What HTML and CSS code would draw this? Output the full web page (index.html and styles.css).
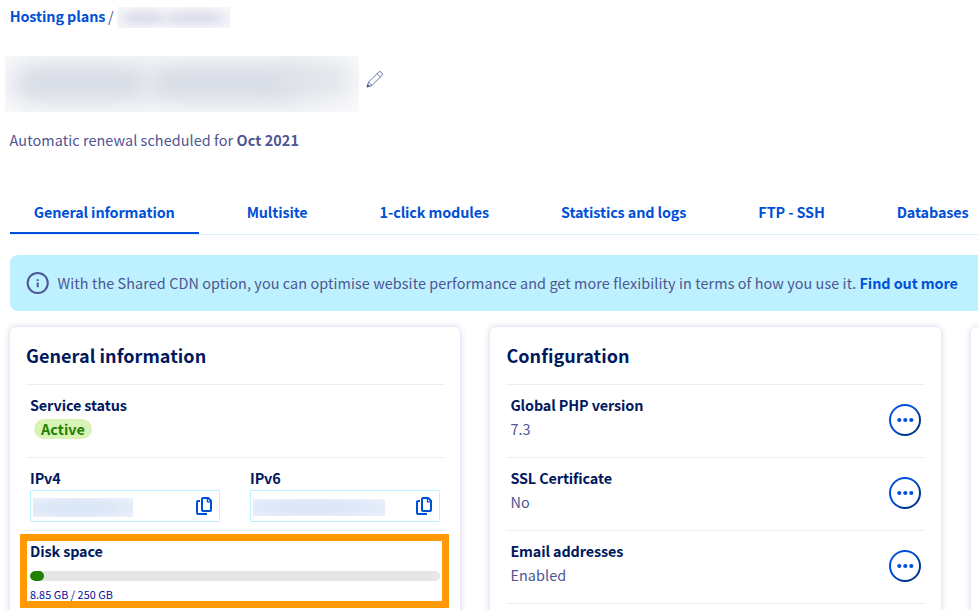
FILE: index.html
```html
<!DOCTYPE html>
<html lang="en">
<head>
<meta charset="utf-8">
<title>Hosting plans</title>
<link rel="stylesheet" href="styles.css">
</head>
<body>
<svg class="defs" width="0" height="0" aria-hidden="true">
  <defs>
    <linearGradient id="ring" x1="0" y1="0" x2="1" y2="1">
      <stop offset="0.4" stop-color="#0050d7"/>
      <stop offset="0.75" stop-color="#00368f"/>
    </linearGradient>
    <symbol id="dots" viewBox="0 0 32 32">
      <circle cx="16" cy="16" r="15" fill="none" stroke="url(#ring)" stroke-width="2"/>
      <g fill="#0050d7"><circle cx="10.3" cy="16" r="2.1"/><circle cx="16.3" cy="16" r="2.1"/><circle cx="22.3" cy="16" r="2.1"/></g>
    </symbol>
    <symbol id="copy" viewBox="0 0 16 18">
      <g fill="none" stroke="#0050d7" stroke-width="2" stroke-linejoin="round">
        <path d="M7 1h5.2L15 3.8V13a1 1 0 0 1-1 1H7a1 1 0 0 1-1-1V2a1 1 0 0 1 1-1z"/>
        <path d="M4 4H2a1 1 0 0 0-1 1v11a1 1 0 0 0 1 1h9"/>
        <path d="M11.4 1v3.8H15" stroke-width="1.2"/>
      </g>
    </symbol>
  </defs>
</svg>
<nav class="breadcrumb"><a class="link">Hosting plans</a><span class="slash">/</span><span class="mask mask-crumb"><i></i><i></i></span></nav>
<header class="title">
  <span class="mask mask-title"><i></i><i></i><i></i></span>
  <svg class="pencil" width="18" height="18" viewBox="0 0 18 18" fill="none" stroke="#4d5592" stroke-width=".8">
    <path d="M1 17l1.6-5L12.5 2.1a1.8 1.8 0 0 1 2.5 0l.9.9a1.8 1.8 0 0 1 0 2.5L6 15.4z"/>
    <path d="M2.6 12L6 15.4M11 3.6L14.4 7"/>
    <path d="M1 17l.8-2.6 1.8 1.8z" fill="#4d5592"/>
  </svg>
</header>
<p class="renewal"><span>Automatic renewal scheduled for</span> <b>Oct 2021</b></p>
<nav class="tabs">
  <a class="tab active">General information</a>
  <a class="tab">Multisite</a>
  <a class="tab">1-click modules</a>
  <a class="tab">Statistics and logs</a>
  <a class="tab">FTP - SSH</a>
  <a class="tab">Databases</a>
</nav>
<div class="banner">
  <svg width="24" height="24" viewBox="0 0 24 24"><circle cx="11.7" cy="12" r="10.1" fill="none" stroke="#4d5592" stroke-width="2"/><path d="M11.7 11.5v4.7M11.7 8.2v1.9" stroke="#4d5592" stroke-width="2"/></svg>
  <span class="banner-text">With the Shared CDN option, you can optimise website performance and get more flexibility in terms of how you use it.</span>
  <a class="link">Find out more</a>
</div>
<main class="cards">
  <section class="card">
    <h2>General information</h2>
    <div class="row">
      <div class="label">Service status</div>
      <span class="badge">Active</span>
    </div>
    <div class="row ips">
      <div class="ip"><div class="label">IPv4</div><div class="field"><span class="mask mask-v4"></span><svg width="16" height="18"><use href="#copy"/></svg></div></div>
      <div class="ip"><div class="label">IPv6</div><div class="field"><span class="mask mask-v6"></span><svg width="16" height="18"><use href="#copy"/></svg></div></div>
    </div>
    <div class="row disk">
      <div class="label">Disk space</div>
      <div class="bar"><div class="fill"></div></div>
      <div class="usage">8.85 GB / 250 GB</div>
      <div class="highlight"></div>
    </div>
  </section>
  <section class="card">
    <h2>Configuration</h2>
    <div class="row split"><div><div class="label">Global PHP version</div><div class="value">7.3</div></div><svg width="32" height="32"><use href="#dots"/></svg></div>
    <div class="row split"><div><div class="label">SSL Certificate</div><div class="value">No</div></div><svg width="32" height="32"><use href="#dots"/></svg></div>
    <div class="row split"><div><div class="label">Email addresses</div><div class="value">Enabled</div></div><svg width="32" height="32"><use href="#dots"/></svg></div>
    <div class="row last"></div>
  </section>
  <section class="card"></section>
</main>
</body>
</html>
```

FILE: styles.css
```css
* { box-sizing: border-box; }
body {
  margin: 0;
  height: 610px;
  overflow: hidden;
  background: #fff;
  color: #4d5592;
  font: 14.4px/24px "Noto Sans CJK SC", "Noto Sans", sans-serif;
  letter-spacing: .085px;
  white-space: nowrap;
}
.defs { position: absolute; }
svg { display: block; flex: none; }
.link { color: #0050d7; font-weight: 700; letter-spacing: -.09px; }
.breadcrumb { display: flex; height: 34px; padding: 4px 0 0 9.7px; }
.slash { margin: 0 3px 0 2.6px; }
.mask { position: relative; display: block; overflow: hidden; flex: none; }
.mask i { position: absolute; border-radius: 50%; }
.mask-crumb { width: 113px; height: 21px; margin-top: 3px; background: #f6f6fa; }
.mask-crumb i { background: #d9d9ea; filter: blur(5px); top: 5px; height: 12px; left: 3px; width: 46px; }
.mask-crumb i + i { left: 46px; width: 64px; }
.title { display: flex; margin: 22px 0 0 5px; height: 56px; }
.mask-title { width: 354px; height: 56px; background: #f9fafb; }
.mask-title i { background: #d5dae4; filter: blur(12px); top: 8px; height: 38px; left: 8px; width: 136px; border-radius: 14px; }
.mask-title i:nth-child(2) { left: 144px; width: 156px; }
.mask-title i:nth-child(3) { left: 275px; width: 72px; top: 5px; height: 38px; background: #e0e3e9; }
.pencil { margin: 14px 0 0 7px; }
.renewal { margin: 16px 0 0 9.6px; height: 24px; }
.tabs { display: flex; margin: 39px 0 0 10px; height: 44px; border-bottom: 1px solid #d9f3fd; }
.tab { flex: none; height: 43px; padding: 9px 24px 0 23.7px; margin-right: 24.3px; color: #0050d7; font-weight: 700; letter-spacing: -.12px; }
.active { border-bottom: 2px solid #0050d7; }
.banner { display: flex; align-items: center; margin: 20px 0 0 10px; height: 56px; padding-left: 16px; background: #bef1ff; border-radius: 8px 0 0 8px; }
.banner-text { margin: 0 3.2px 0 7.5px; }
.cards { display: grid; grid-template-columns: repeat(3, 450.4px); gap: 30px; margin: 16px 0 0 10px; }
.card { height: 300px; padding: 16px 16px 0; background: #fff; border-radius: 6px; box-shadow: 0 0 6px rgba(77, 70, 180, .27); }
h2 { margin: -2px 0 0; height: 43px; font-size: 18px; line-height: 28px; letter-spacing: .06px; font-weight: 700; color: #00185e; }
.row { position: relative; height: 73px; padding: 8px 4px 0; border-top: 1px solid #eeeef0; }
.last { height: 10px; }
.label { color: #00185e; font-weight: 700; letter-spacing: -.12px; }
.badge { display: block; width: 58px; height: 20px; margin: 2px 0 0 4px; border-radius: 10px; background: #d9f3b7; color: #228003; font-weight: 700; line-height: 20px; text-align: center; }
.ips { display: flex; gap: 30px; }
.ip { width: 190px; }
.field { display: flex; align-items: center; justify-content: space-between; height: 32px; padding: 0 7px 0 2px; border: 1px solid #bef1ff; border-radius: 1px; }
.mask-v4 { width: 100px; height: 19px; margin-top: 3px; background: radial-gradient(ellipse at 45% 50%, #dce7f7 40%, #edf2fc 100%); }
.mask-v6 { width: 132px; height: 17px; margin-top: 3px; background: radial-gradient(ellipse at 45% 50%, #dde7f8 40%, #edf2fc 100%); }
.bar { height: 10px; margin-top: 8px; border-radius: 5px; background: #e6e6e6; overflow: hidden; }
.fill { width: 14px; height: 10px; border-radius: 5px; background: #228003; }
.usage { margin-top: 4px; font-size: 10.8px; line-height: 18px; letter-spacing: .06px; color: #000e9c; }
.highlight { position: absolute; left: -6px; top: 3px; width: 429px; height: 74px; border: 7px solid #ff9a05; border-radius: 1px; }
.split { display: flex; justify-content: space-between; }
.split svg { margin-top: 11px; }
```
